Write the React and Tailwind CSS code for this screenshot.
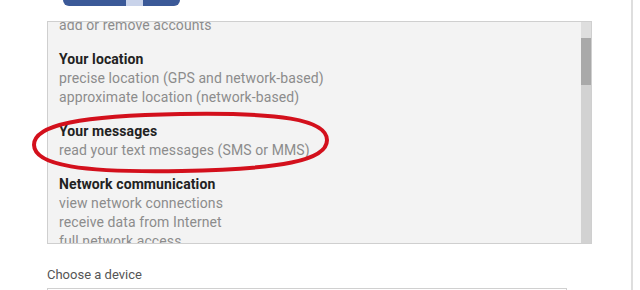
import React from 'react';

const groups = [
    { title: null, items: ['add or remove accounts'] },
    { title: 'Your location', items: ['precise location (GPS and network-based)', 'approximate location (network-based)'] },
    { title: 'Your messages', items: ['read your text messages (SMS or MMS)'] },
    { title: 'Network communication', items: ['view network connections', 'receive data from Internet', 'full network access'] },
];

const App = () => {
    return (
        <div className="relative w-[640px] h-[290px] overflow-hidden bg-white font-['Roboto',sans-serif]">
            <div className="w-[633px] h-full border-r-2 border-[#dedede]">
                {/* top button, mostly scrolled off */}
                <div className="ml-[63px] w-[117px] h-[6px] bg-[#3b5998] rounded-b-[7px] flex">
                    <div className="ml-[63px] w-[17px] h-full bg-[#c9d3ea]"></div>
                </div>

                {/* permissions list */}
                <div className="mt-[15px] ml-[47px] w-[545px] h-[223px] border border-[#cfcfcf] bg-[#f3f3f3] flex">
                    <div className="flex-1 overflow-hidden pl-[11px]">
                        <div className="-mt-[6px] flex flex-col gap-[15px] text-[14px] leading-[19px] tracking-[0.1px]">
                            {groups.map((g, i) => (
                                <div key={i}>
                                    {g.title && <div className="font-bold text-[#222]">{g.title}</div>}
                                    {g.items.map((t) => (
                                        <div key={t} className="text-[#8c8c8c]">{t}</div>
                                    ))}
                                </div>
                            ))}
                        </div>
                    </div>
                    <div className="w-[10px] bg-[#d2d2d2] flex flex-col">
                        <div className="h-[16px] bg-[#dedede]"></div>
                        <div className="h-[47px] bg-[#a9a9a9]"></div>
                    </div>
                </div>

                <div className="mt-[23px] ml-[47px] text-[13px] leading-[16px] text-[#555]">Choose a device</div>
                <div className="mt-[5px] ml-[47px] w-[520px] h-[30px] border border-[#d0d0d0] bg-white"></div>
            </div>

            {/* hand-drawn red circle annotation */}
            <svg className="absolute left-0 top-0 pointer-events-none" width="640" height="290">
                <path
                    d="M 34 142.5 C 34 122 82 114 181 114 C 280 114 327 122 327 142.5 C 327 163 280 171 181 171 C 82 171 34 163 34 142.5 Z"
                    fill="none"
                    stroke="#d3101c"
                    strokeWidth="4"
                    transform="rotate(-1 181 142.5)"
                />
            </svg>
        </div>
    );
};

export default App;
